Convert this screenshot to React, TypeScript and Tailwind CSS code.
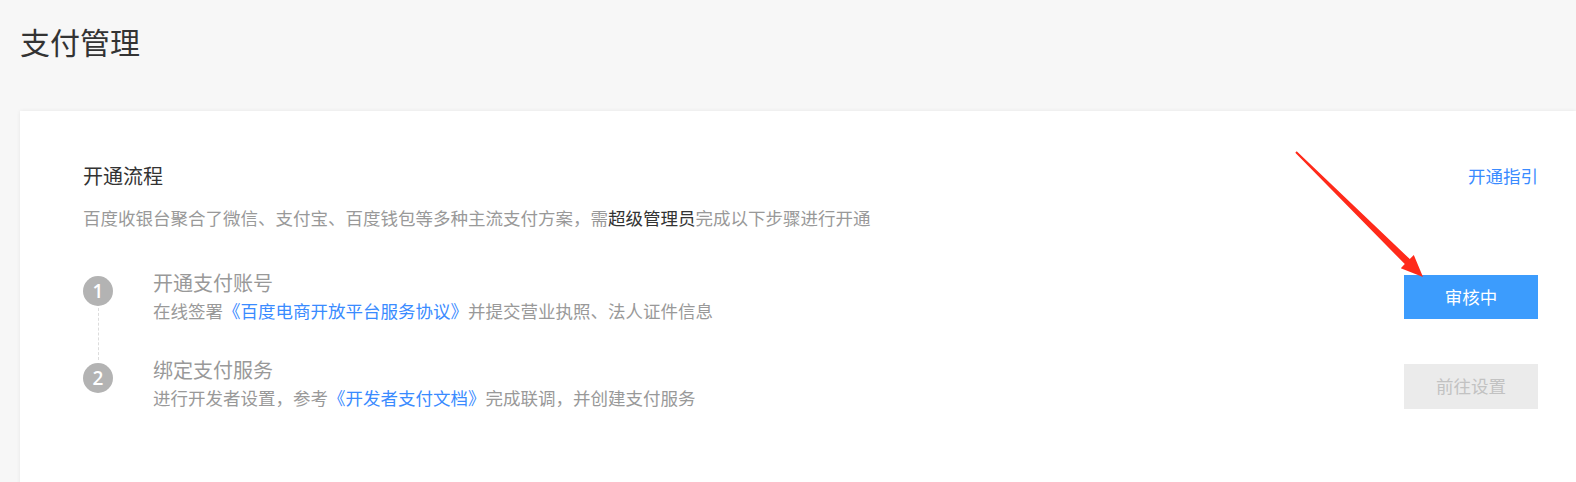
const steps = [
  {
    no: 1,
    title: "开通支付账号",
    before: "在线签署",
    link: "《百度电商开放平台服务协议》",
    after: "并提交营业执照、法人证件信息",
    button: "审核中",
    active: true,
  },
  {
    no: 2,
    title: "绑定支付服务",
    before: "进行开发者设置，参考",
    link: "《开发者支付文档》",
    after: "完成联调，并创建支付服务",
    button: "前往设置",
    active: false,
  },
];

const font = "font-['Microsoft_YaHei','Noto_Sans_CJK_SC',sans-serif]";

export default function App() {
  return (
    <div className={`relative h-[482px] w-[1576px] overflow-hidden bg-[#f7f7f7] ${font}`}>
      <div className="pl-[20px] pt-[21px]">
        <h1 className="text-[30px] leading-[40px] text-[#333]">支付管理</h1>
        <div className="mt-[50px] h-[400px] bg-white pl-[63px] pr-[38px] pt-[51px] shadow-[0_0_4px_rgba(0,0,0,0.07)]">
          <div className="flex items-center justify-between">
            <h2 className="text-[20px] leading-[28px] text-[#333]">开通流程</h2>
            <a className="text-[17.5px] leading-[28px] text-[#3a8bff]">开通指引</a>
          </div>
          <p className="mt-[14px] text-[17.5px] leading-[28px] text-[#999]">
            百度收银台聚合了微信、支付宝、百度钱包等多种主流支付方案，需
            <span className="text-[#333]">超级管理员</span>
            完成以下步骤进行开通
          </p>

          <div className="mt-[37px] flex flex-col gap-[31px]">
            {steps.map((s, i) => (
              <div key={s.no} className="relative flex items-center">
                <div className="flex flex-1 items-start gap-[40px]">
                  <div className="mt-[7px] flex h-[30px] w-[30px] shrink-0 items-center justify-center rounded-full bg-[#b3b3b3] font-['Open_Sans',sans-serif] text-[19px] font-semibold text-white">
                    {s.no}
                  </div>
                  <div>
                    <div className="text-[20px] leading-[28px] text-[#999]">{s.title}</div>
                    <div className="text-[17.5px] leading-[28px] text-[#999]">
                      {s.before}
                      <span className="text-[#3a8bff]">{s.link}</span>
                      {s.after}
                    </div>
                  </div>
                </div>
                {i === 0 && (
                  <div className="absolute left-[15px] top-[39px] h-[52px] border-l border-dashed border-[#dcdcdc]" />
                )}
                <button
                  className={
                    s.active
                      ? "h-[44px] w-[134px] bg-[#3c9cfd] text-[17.5px] text-white"
                      : "mt-[4px] h-[45px] w-[134px] bg-[#ebebeb] text-[17.5px] text-[#c2c2c2]"
                  }
                >
                  {s.button}
                </button>
              </div>
            ))}
          </div>
        </div>
      </div>

      <svg className="pointer-events-none absolute left-0 top-0" width="1576" height="482">
        <polygon
          fill="#ff2a1a"
          points="1295.3,152.7 1404.8,264.1 1400.8,268.2 1423,277 1413.8,255 1409.8,259.1 1296.7,151.3"
        />
      </svg>
    </div>
  );
}
